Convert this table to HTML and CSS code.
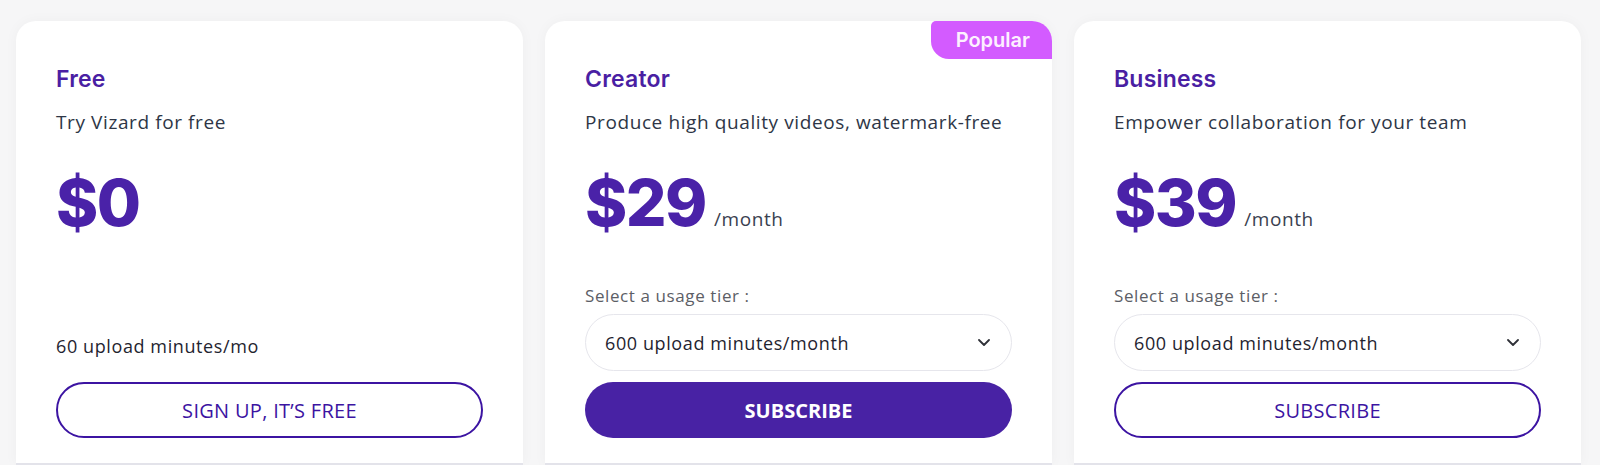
FILE: index.html
```html
<!DOCTYPE html>
<html lang="en">
<head>
  <meta charset="UTF-8">
  <meta name="viewport" content="width=device-width, initial-scale=1.0">
  <title>Vizard Pricing</title>
  <link rel="stylesheet" href="styles.css">
</head>
<body>
  <div class="plans">
    <div class="plan">
      <h2 class="plan-name">Free</h2>
      <p class="plan-desc">Try Vizard for free</p>
      <div class="price"><span class="amount">$0</span></div>
      <div class="plan-bottom">
        <p class="quota">60 upload minutes/mo</p>
        <button class="btn btn-outline">SIGN UP, IT’S FREE</button>
      </div>
    </div>

    <div class="plan">
      <span class="badge">Popular</span>
      <h2 class="plan-name">Creator</h2>
      <p class="plan-desc">Produce high quality videos, watermark-free</p>
      <div class="price"><span class="amount">$29</span><span class="period">/month</span></div>
      <div class="plan-bottom">
        <label class="tier-label">Select a usage tier :</label>
        <div class="tier-select">
          <span>600 upload minutes/month</span>
          <svg width="12" height="7" viewBox="0 0 12 7"><polyline points="1,1 6,6 11,1" fill="none" stroke="#2f3138" stroke-width="1.8" stroke-linecap="round" stroke-linejoin="round"/></svg>
        </div>
        <button class="btn btn-solid">SUBSCRIBE</button>
      </div>
    </div>

    <div class="plan">
      <h2 class="plan-name">Business</h2>
      <p class="plan-desc">Empower collaboration for your team</p>
      <div class="price"><span class="amount">$39</span><span class="period">/month</span></div>
      <div class="plan-bottom">
        <label class="tier-label">Select a usage tier :</label>
        <div class="tier-select">
          <span>600 upload minutes/month</span>
          <svg width="12" height="7" viewBox="0 0 12 7"><polyline points="1,1 6,6 11,1" fill="none" stroke="#2f3138" stroke-width="1.8" stroke-linecap="round" stroke-linejoin="round"/></svg>
        </div>
        <button class="btn btn-outline">SUBSCRIBE</button>
      </div>
    </div>
  </div>
</body>
</html>
```

FILE: styles.css
```css
body { margin: 0; background-color: #f6f6f7; font-family: "Open Sans", Arial, sans-serif; overflow: hidden; }
.plans { display: grid; grid-template-columns: repeat(3, 507px); gap: 22px; padding: 21px 0 0 16px; }
.plan { position: relative; overflow: hidden; height: 444px; box-sizing: border-box; display: flex; flex-direction: column; padding: 44px 40px 25px; background-color: #ffffff; border-radius: 20px 20px 0 0; border-bottom: 2px solid #e3e3ea; box-shadow: 0 0 14px rgba(0, 0, 0, 0.035); }
.badge { position: absolute; top: 0; right: 0; height: 38px; padding: 0 22px 0 25px; display: flex; align-items: center; background-color: #d35bff; color: #fdf0ff; font-family: Inter, sans-serif; font-weight: 600; font-size: 20px; border-radius: 5px 0 0 18px; }
.plan-name { margin: 0; font-family: Inter, sans-serif; font-weight: 600; font-size: 23px; line-height: 28px; color: #4a1fa3; letter-spacing: 0.2px; }
.plan-desc { margin: 16px 0 0; font-size: 19px; line-height: 26px; color: #2e3646; letter-spacing: 0.6px; }
.price { margin-top: 36px; display: flex; align-items: baseline; }
.amount { font-family: Inter, sans-serif; font-weight: 800; font-size: 64px; line-height: 64px; color: #4a22a8; letter-spacing: -1.5px; }
.period { margin-left: 8px; font-size: 19px; color: #3a4150; letter-spacing: 0.6px; }
.plan-bottom { margin-top: auto; display: flex; flex-direction: column; }
.quota { margin: 0 0 23px; font-size: 18px; line-height: 26px; color: #1f2430; letter-spacing: 0.6px; }
.tier-label { font-size: 17px; line-height: 22px; color: #5c5e66; margin-bottom: 7px; letter-spacing: 0.6px; }
.tier-select { height: 57px; box-sizing: border-box; border: 1.5px solid #e6e6ec; border-radius: 29px; display: flex; align-items: center; justify-content: space-between; padding: 0 21px 0 19px; font-size: 18px; color: #1f2430; margin-bottom: 11px; letter-spacing: 0.6px; }
.btn { height: 56px; border-radius: 28px; font-family: "Open Sans", Arial, sans-serif; font-size: 20px; cursor: pointer; }
.btn-outline { background-color: #ffffff; border: 2px solid #3c14a2; color: #3c14a2; font-weight: 500; letter-spacing: 0.3px; }
.btn-solid { background-color: #4822a4; border: none; color: #ffffff; font-weight: 700; }
```
